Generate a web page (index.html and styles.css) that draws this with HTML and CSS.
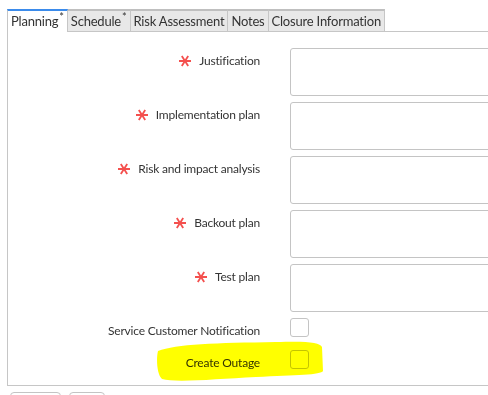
FILE: index.html
```html
<!DOCTYPE html>
<html lang="en">
<head>
    <meta charset="UTF-8">
    <title>Change Request - Planning</title>
    <link rel="stylesheet" href="styles.css">
</head>
<body>
    <div class="page">
        <!-- Tab strip -->
        <div class="tabs">
            <div class="tab active">Planning<sup>*</sup></div>
            <div class="tab">Schedule<sup>*</sup></div>
            <div class="tab">Risk Assessment</div>
            <div class="tab">Notes</div>
            <div class="tab">Closure Information</div>
        </div>

        <!-- Planning section -->
        <div class="panel">
            <div class="row">
                <label class="label"><span class="req"><svg viewBox="0 0 12 12"><path d="M0 6H12M2.8 1L9.2 11M9.2 1L2.8 11"/></svg></span>Justification</label>
                <textarea class="field"></textarea>
            </div>
            <div class="row">
                <label class="label"><span class="req"><svg viewBox="0 0 12 12"><path d="M0 6H12M2.8 1L9.2 11M9.2 1L2.8 11"/></svg></span>Implementation plan</label>
                <textarea class="field"></textarea>
            </div>
            <div class="row">
                <label class="label"><span class="req"><svg viewBox="0 0 12 12"><path d="M0 6H12M2.8 1L9.2 11M9.2 1L2.8 11"/></svg></span>Risk and impact analysis</label>
                <textarea class="field"></textarea>
            </div>
            <div class="row">
                <label class="label"><span class="req"><svg viewBox="0 0 12 12"><path d="M0 6H12M2.8 1L9.2 11M9.2 1L2.8 11"/></svg></span>Backout plan</label>
                <textarea class="field"></textarea>
            </div>
            <div class="row">
                <label class="label"><span class="req"><svg viewBox="0 0 12 12"><path d="M0 6H12M2.8 1L9.2 11M9.2 1L2.8 11"/></svg></span>Test plan</label>
                <textarea class="field"></textarea>
            </div>
            <div class="row check-row">
                <label class="label">Service Customer Notification</label>
                <span class="checkbox"></span>
            </div>
            <div class="row check-row">
                <label class="label">Create Outage</label>
                <span class="checkbox"></span>
            </div>
        </div>

        <div class="buttons">
            <button class="btn wide"></button>
            <button class="btn"></button>
        </div>

        <!-- highlighter mark drawn over the screenshot -->
        <svg class="highlight" viewBox="0 0 170 46" width="170" height="46">
            <path d="M2 12 C 20 5, 60 4, 120 3 C 150 2, 164 3, 166 8 L 167 32 C 165 36, 140 36, 100 38 C 60 40, 20 44, 6 40 C 1 36, 0 20, 2 12 Z"/>
        </svg>
    </div>
</body>
</html>
```

FILE: styles.css
```css
/* Page */
body {
    margin: 0;
    overflow: hidden;
    background: #fff;
    font-family: 'Lato', 'Liberation Sans', sans-serif;
    font-size: 12px;
    letter-spacing: -0.2px;
    color: #343434;
}

.page {
    position: relative;
    padding: 9px 0 0 7px;
    width: 520px;
}

/* Tab strip */
.tabs {
    display: flex;
    border-bottom: 1px solid #c6c6c6;
}

.tab {
    height: 20px;
    line-height: 20px;
    padding: 0 3px;
    font-size: 13px;
    background: #e8e8e8;
    border-top: 2px solid #bfbfbf;
    border-right: 1px solid #c6c6c6;
    color: #333;
}

.tab sup {
    font-size: 11px;
    line-height: 0;
    margin-left: 1px;
}

.tab.active {
    background: #fff;
    border-top-color: #3b8beb;
    border-left: 1px solid #c6c6c6;
    margin-bottom: -1px;
    height: 21px;
}

/* Form panel */
.panel {
    display: flex;
    flex-direction: column;
    gap: 6px;
    height: 321px;
    padding: 16px 0 16px 0;
    border-left: 1px solid #c6c6c6;
    border-bottom: 1px solid #c6c6c6;
}

.row {
    display: grid;
    grid-template-columns: 252px 1fr;
    column-gap: 30px;
    align-items: start;
}

.label {
    display: flex;
    justify-content: flex-end;
    align-items: center;
    height: 25px;
    color: #343434;
}

.req {
    display: inline-flex;
    width: 12px;
    height: 12px;
    margin-right: 8px;
}

.req svg {
    width: 12px;
    height: 12px;
    stroke: #f4504e;
    stroke-width: 1.8;
    fill: none;
}

.field {
    display: block;
    box-sizing: border-box;
    width: 230px;
    height: 48px;
    margin: 0;
    border: 1px solid #c4c4c4;
    border-radius: 3px;
    resize: none;
    background: #fff;
}

.check-row {
    height: 24px;
}

.check-row + .check-row {
    margin-top: 2px;
}

.checkbox {
    display: block;
    width: 19px;
    height: 19px;
    box-sizing: border-box;
    border: 1px solid #c4c4c4;
    border-radius: 3px;
}

/* Buttons peeking below the panel */
.buttons {
    display: flex;
    gap: 8px;
    padding: 6px 0 0 3px;
}

.btn {
    width: 36px;
    height: 24px;
    border: 1px solid #c4c4c4;
    border-radius: 4px;
    background: #fff;
}

.btn.wide {
    width: 51px;
}

/* Yellow marker */
.highlight {
    position: absolute;
    left: 156px;
    top: 339px;
    mix-blend-mode: multiply;
}

.highlight path {
    fill: #ffff00;
}
```
